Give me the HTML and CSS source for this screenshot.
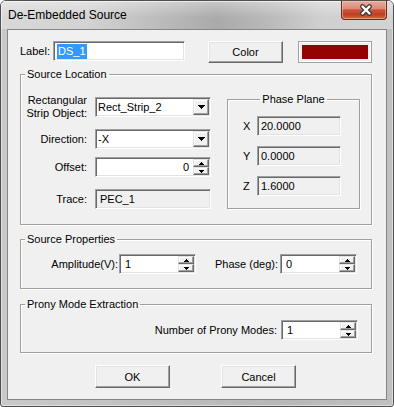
FILE: index.html
```html
<!DOCTYPE html>
<html>
<head>
<meta charset="utf-8">
<title>De-Embedded Source</title>
<link rel="stylesheet" href="styles.css">
</head>
<body>
<div class="window">
  <div class="titlebar">
    <span class="title">De-Embedded Source</span>
    <div class="close">
      <svg width="14" height="12" viewBox="0 0 14 12">
        <path d="M3.5 2.5 L10.5 9.5 M10.5 2.5 L3.5 9.5" stroke="#3b3b3b" stroke-width="4.6" stroke-linecap="round" fill="none"/>
        <path d="M3.5 2.5 L10.5 9.5 M10.5 2.5 L3.5 9.5" stroke="#ffffff" stroke-width="2.4" stroke-linecap="round" fill="none"/>
      </svg>
    </div>
  </div>
  <div class="client">
    <div class="row-top">
      <span class="lbl-label">Label:</span>
      <div class="edit label-edit"><span class="sel">DS_1</span></div>
      <div class="btn color-btn">Color</div>
      <div class="swatch"><div class="swatch-fill"></div></div>
    </div>

    <fieldset class="group g-loc">
      <legend>Source Location</legend>
      <div class="loc-body">
        <div class="form">
          <div class="frow">
            <span class="fl two">Rectangular<br>Strip Object:</span>
            <div class="edit combo"><span class="val">Rect_Strip_2</span><div class="drop"><svg width="7" height="4" viewBox="0 0 7 4"><path d="M0 0h7v1h-1v1h-1v1h-1v1h-1v-1h-1v-1h-1v-1h-1z" fill="#000"/></svg></div></div>
          </div>
          <div class="frow r2">
            <span class="fl">Direction:</span>
            <div class="edit combo"><span class="val">-X</span><div class="drop"><svg width="7" height="4" viewBox="0 0 7 4"><path d="M0 0h7v1h-1v1h-1v1h-1v1h-1v-1h-1v-1h-1v-1h-1z" fill="#000"/></svg></div></div>
          </div>
          <div class="frow r3">
            <span class="fl">Offset:</span>
            <div class="edit spin"><span class="val right">0</span>
              <div class="spinbtns">
                <div class="sb"><svg width="5" height="3" viewBox="0 0 5 3"><path d="M2 0h1v1h1v1h1v1h-5v-1h1v-1h1z" fill="#000"/></svg></div>
                <div class="sb"><svg width="5" height="3" viewBox="0 0 5 3"><path d="M0 0h5v1h-1v1h-1v1h-1v-1h-1v-1h-1z" fill="#000"/></svg></div>
              </div>
            </div>
          </div>
          <div class="frow r4">
            <span class="fl">Trace:</span>
            <div class="edit ro"><span class="val">PEC_1</span></div>
          </div>
        </div>

        <fieldset class="group g-phase">
          <legend>Phase Plane</legend>
          <div class="phase-body">
            <div class="prow"><span class="pl">X</span><div class="edit ro pf"><span class="val">20.0000</span></div></div>
            <div class="prow"><span class="pl">Y</span><div class="edit ro pf"><span class="val">0.0000</span></div></div>
            <div class="prow"><span class="pl">Z</span><div class="edit ro pf"><span class="val">1.6000</span></div></div>
          </div>
        </fieldset>
      </div>
    </fieldset>

    <fieldset class="group g-src">
      <legend>Source Properties</legend>
      <div class="src-body">
        <span class="sl1">Amplitude(V):</span>
        <div class="edit spin sw"><span class="val">1</span>
          <div class="spinbtns">
            <div class="sb"><svg width="5" height="3" viewBox="0 0 5 3"><path d="M2 0h1v1h1v1h1v1h-5v-1h1v-1h1z" fill="#000"/></svg></div>
            <div class="sb"><svg width="5" height="3" viewBox="0 0 5 3"><path d="M0 0h5v1h-1v1h-1v1h-1v-1h-1v-1h-1z" fill="#000"/></svg></div>
          </div>
        </div>
        <span class="sl2">Phase (deg):</span>
        <div class="edit spin sw"><span class="val">0</span>
          <div class="spinbtns">
            <div class="sb"><svg width="5" height="3" viewBox="0 0 5 3"><path d="M2 0h1v1h1v1h1v1h-5v-1h1v-1h1z" fill="#000"/></svg></div>
            <div class="sb"><svg width="5" height="3" viewBox="0 0 5 3"><path d="M0 0h5v1h-1v1h-1v1h-1v-1h-1v-1h-1z" fill="#000"/></svg></div>
          </div>
        </div>
      </div>
    </fieldset>

    <fieldset class="group g-prony">
      <legend>Prony Mode Extraction</legend>
      <div class="prony-body">
        <span class="prl">Number of Prony Modes:</span>
        <div class="edit spin sw"><span class="val">1</span>
          <div class="spinbtns">
            <div class="sb"><svg width="5" height="3" viewBox="0 0 5 3"><path d="M2 0h1v1h1v1h1v1h-5v-1h1v-1h1z" fill="#000"/></svg></div>
            <div class="sb"><svg width="5" height="3" viewBox="0 0 5 3"><path d="M0 0h5v1h-1v1h-1v1h-1v-1h-1v-1h-1z" fill="#000"/></svg></div>
          </div>
        </div>
      </div>
    </fieldset>

    <div class="actions">
      <div class="btn act ok">OK</div>
      <div class="btn act cancel">Cancel</div>
    </div>
  </div>
</div>
</body>
</html>
```

FILE: styles.css
```css
* { box-sizing: border-box; }
html, body { margin: 0; padding: 0; }
body {
  width: 394px;
  height: 407px;
  overflow: hidden;
  background: #ffffff;
  font-family: "Liberation Sans", Arial, sans-serif;
  font-size: 11px;
  color: #000;
}

.window {
  width: 394px;
  height: 407px;
  border: 1px solid #4f4f4f;
  border-radius: 6px 6px 3px 3px;
  background: linear-gradient(90deg, #c9c9c9 0%, #bdbdbd 45%, #b7b7b7 70%, #c0c0c0 100%);
  overflow: hidden;
  display: flex;
  flex-direction: column;
  box-shadow: inset 0 0 0 1px rgba(255,255,255,0.45);
}

.titlebar {
  height: 28px;
  flex: none;
  display: flex;
  align-items: flex-start;
  padding-left: 7px;
  background:
    linear-gradient(180deg, rgba(255,255,255,0.35) 0%, rgba(255,255,255,0) 60%),
    linear-gradient(90deg, #d8d8d8 0%, #d3d3d3 22%, #bcbcbc 40%, #aaaaaa 55%, #b9b9b9 68%, #d0d0d0 82%, #d3d3d3 100%);
  box-shadow: inset 1px 1px 0 rgba(255,255,255,0.6);
}
.title {
  padding-top: 7px;
  line-height: 14px;
  font-size: 12px;
  color: #000;
}
.close {
  margin-left: auto;
  margin-right: 6px;
  width: 46px;
  height: 19px;
  border: 1px solid #6b2a1c;
  border-top: none;
  border-radius: 0 0 4px 4px;
  background: linear-gradient(180deg, #e8ab9c 0%, #dc8b77 42%, #c8543a 50%, #bf3f25 75%, #d8693c 100%);
  box-shadow: inset 0 0 0 1px rgba(255,220,200,0.45);
  display: flex;
  align-items: center;
  justify-content: center;
  padding-left: 3px;
}
.close svg { display: block; }

.client {
  flex: none;
  margin: 0 6px 6px 6px;
  height: 371px;
  border: 1px solid #858585;
  background: #f0f0f0;
  padding: 11px 0 0 12px;
}

/* generic controls */
.edit {
  height: 20px;
  background: #fff;
  border: 1px solid;
  border-color: #a0a0a0 #ffffff #ffffff #a0a0a0;
  box-shadow: inset 1px 1px 0 #696969, inset -1px -1px 0 #e3e3e3;
  display: flex;
  align-items: center;
}
.edit .val {
  flex: 1;
  padding-left: 2px;
  line-height: 16px;
  white-space: nowrap;
}
.edit .val.right { text-align: right; padding-right: 4px; }
.edit.ro { background: #f0f0f0; }

.btn {
  background: #f0f0f0;
  border: 1px solid;
  border-color: #ffffff #696969 #696969 #ffffff;
  box-shadow: inset -1px -1px 0 #a0a0a0, inset 1px 1px 0 #e3e3e3;
  display: flex;
  align-items: center;
  justify-content: center;
}

/* top row */
.row-top {
  display: flex;
  align-items: flex-start;
  height: 22px;
}
.lbl-label { width: 33px; line-height: 20px; }
.label-edit { width: 132px; padding-left: 3px; }
.sel {
  background: #3399ff;
  color: #fff;
  line-height: 15px;
  padding: 0 1px;
}
.color-btn { width: 75px; height: 22px; margin-left: 23px; }
.swatch {
  width: 74px;
  height: 22px;
  margin-left: 15px;
  border: 1px solid #a0a0a0;
  box-shadow: inset 1px 1px 0 #fff, inset -1px -1px 0 #fff;
  padding: 3px;
  background: #f0f0f0;
}
.swatch-fill { width: 100%; height: 100%; background: #930303; }

/* group boxes */
.group {
  margin: 0;
  padding: 0;
  min-width: 0;
  border: 1px solid #a0a0a0;
  box-shadow: 1px 1px 0 #fff, inset 1px 1px 0 #fff;
}
.group legend {
  margin-left: 4px;
  padding: 0 2px;
  line-height: 13px;
  height: 13px;
}
.g-loc { width: 352px; margin-top: 5px; }
.loc-body { display: flex; align-items: flex-start; }
.form { padding: 16px 0 15px 0; }
.frow { display: flex; align-items: center; height: 20px; }
.fl { width: 66px; margin-right: 8px; text-align: right; }
.fl.two { line-height: 13px; }
.r2 { margin-top: 12px; }
.r3 { margin-top: 8px; }
.r4 { margin-top: 12px; }
.combo, .spin, .ro { width: 116px; }
.ro .val { padding-left: 4px; }

.drop {
  width: 16px;
  height: 16px;
  margin-right: 1px;
  background: #f0f0f0;
  border: 1px solid;
  border-color: #e3e3e3 #696969 #696969 #e3e3e3;
  box-shadow: inset -1px -1px 0 #a0a0a0, inset 1px 1px 0 #fff;
  display: flex;
  align-items: center;
  justify-content: center;
}
.drop svg, .sb svg { display: block; }

.spinbtns {
  display: flex;
  flex-direction: column;
  width: 16px;
  margin-right: 1px;
}
.sb {
  height: 8px;
  background: #f0f0f0;
  border: 1px solid;
  border-color: #e3e3e3 #696969 #696969 #e3e3e3;
  box-shadow: inset -1px -1px 0 #a0a0a0, inset 1px 1px 0 #fff;
  display: flex;
  align-items: center;
  justify-content: center;
}

.g-phase { width: 133px; margin-left: 16px; margin-top: 12px; }
.g-phase legend { margin: 0 auto; padding: 0 2px; }
.phase-body { padding: 10px 0 12px 15px; display: flex; flex-direction: column; gap: 10px; }
.prow { display: flex; align-items: center; height: 20px; }
.pl { width: 14px; }
.pf { width: 84px; }
.pf .val { padding-left: 3px; }

.g-src { width: 352px; margin-top: 8px; }
.src-body { display: flex; align-items: center; padding: 8px 0 14px 0; }
.sl1 { width: 98px; text-align: right; padding-right: 1px; }
.sl2 { width: 84px; text-align: right; padding-right: 2px; }
.sw { width: 77px; }
.sw .val { padding-left: 5px; }

.g-prony { width: 352px; margin-top: 9px; }
.prony-body { display: flex; align-items: center; justify-content: flex-end; padding: 9px 13px 12px 0; }
.prl { margin-right: 4px; }

.actions { display: flex; margin-top: 12px; }
.act { width: 75px; height: 23px; }
.ok { margin-left: 75px; }
.cancel { margin-left: 51px; }
```
